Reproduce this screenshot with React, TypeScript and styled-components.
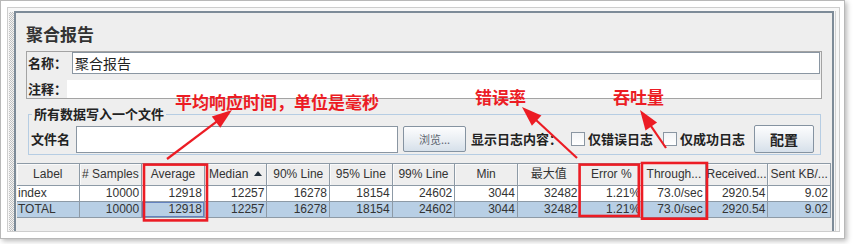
import React from "react";
import styled, { createGlobalStyle } from "styled-components";

const CJK = `"Noto Sans CJK SC", "Liberation Sans", sans-serif`;
const SANS = `"Liberation Sans", Arial, "Noto Sans CJK SC", sans-serif`;
const RED = "#ec1c24";
const EDGE = "#7d8b98";
const GRID = "#8d9aa6";

const Global = createGlobalStyle`
  html, body { margin: 0; padding: 0; background: #fff; }
  body { width: 853px; height: 244px; overflow: hidden; font-family: ${CJK}; }
  * { box-sizing: border-box; }
`;

const Stage = styled.div`
  position: relative;
  width: 853px;
  height: 244px;
`;

const Shot = styled.div`
  width: 845px;
  height: 239px;
  border: 1px solid #b8b8b8;
  background: #fff;
  box-shadow: 2px 2px 5px rgba(0, 0, 0, 0.28);
  padding: 6px 4px 6px 6px;
`;

const Frame = styled.div`
  height: 100%;
  border: 1px solid #cdcdcd;
  display: flex;
  padding-top: 3px;
  background: #f7f7f7;
`;

const Gutter = styled.div`
  width: 5px;
  margin-left: 1px;
  margin-top: 1px;
  background: repeating-conic-gradient(#c2c2c2 0 25%, #f4f4f4 0 50%) 0 0 / 2px 2px;
`;

const Rail = styled.div`
  width: 4px;
  margin-left: 1px;
  border-left: 1px solid #d2d2d2;
`;

const Panel = styled.div`
  width: 820px;
  background: #eeeeee;
  border-top: 2px solid ${EDGE};
  border-left: 2px solid ${EDGE};
  border-right: 2px solid ${EDGE};
  display: flex;
  flex-direction: column;
`;

const Title = styled.div`
  margin: 9px 0 5px 10px;
  height: 24px;
  font: 700 17px/24px ${CJK};
  color: #333;
`;

const NameBox = styled.div`
  margin: 0 10px;
  border: 1px solid #a3a3a3;
  display: flex;
  flex-direction: column;
`;

const FieldRow = styled.div<{ $gap?: number }>`
  display: flex;
  align-items: center;
  margin-top: ${(p) => p.$gap ?? 0}px;
`;

const Label = styled.span<{ $w: number; $pad?: number }>`
  flex: none;
  width: ${(p) => p.$w}px;
  padding-left: ${(p) => p.$pad ?? 1}px;
  font: 700 13px/16px ${CJK};
  color: #222;
  white-space: nowrap;
`;

const TextField = styled.div<{ $h: number; $plain?: boolean }>`
  flex: 1;
  height: ${(p) => p.$h}px;
  margin-right: ${(p) => (p.$plain ? 0 : 1)}px;
  background: #fff;
  border: ${(p) => (p.$plain ? "none" : "1px solid #8a96a2")};
  padding-left: 2px;
  font: 400 14px/20px ${CJK};
  color: #222;
`;

const FileSet = styled.fieldset`
  margin: 7px 11px 0 12px;
  padding: 3px 0 1px 0;
  border: 1px solid #b6cde3;
  min-width: 0;
`;

const Legend = styled.legend`
  margin-left: 3px;
  padding: 0 2px;
  font: 700 13px/16px ${CJK};
  color: #222;
`;

const FileRow = styled.div`
  display: flex;
  align-items: center;
  height: 28px;
`;

const FileInput = styled.div`
  flex: none;
  width: 322px;
  height: 27px;
  background: #fff;
  border: 1px solid #8a96a2;
`;

const Button = styled.button<{ $w: number; $h: number; $small?: boolean }>`
  flex: none;
  width: ${(p) => p.$w}px;
  height: ${(p) => p.$h}px;
  margin-left: ${(p) => (p.$small ? 5 : 0)}px;
  padding: 0;
  border: 1px solid #8593a1;
  border-radius: 2px;
  background: linear-gradient(#fdfdfe, #e9eef3 55%, #d6e0ea);
  font: ${(p) => (p.$small ? `400 11px/14px ${CJK}` : `700 14px/18px ${CJK}`)};
  color: ${(p) => (p.$small ? "#5c6570" : "#222")};
`;

const LogLabel = styled.span`
  flex: none;
  width: 100px;
  margin-left: 5px;
  font: 700 13px/16px ${CJK};
  color: #222;
  white-space: nowrap;
`;

const Check = styled.span`
  flex: none;
  width: 14px;
  height: 14px;
  border: 1px solid #8a96a2;
  background: linear-gradient(#f2f4f6, #ffffff);
`;

const CheckText = styled.span<{ $w: number }>`
  flex: none;
  width: ${(p) => p.$w}px;
  margin-left: 3px;
  font: 700 13px/16px ${CJK};
  color: #222;
  white-space: nowrap;
`;

const Grid = styled.table`
  margin: 8px 0 0 1px;
  width: 814px;
  table-layout: fixed;
  border-collapse: separate;
  border-spacing: 0;
  border-top: 1px solid ${GRID};
  font: 400 12px ${SANS};
  color: #333;
`;

const Th = styled.th`
  padding: 0;
  line-height: 21px;
  font-weight: 400;
  text-align: center;
  white-space: nowrap;
  overflow: hidden;
  background: #eeeeee;
  border-right: 1px solid ${GRID};
  border-bottom: 1px solid ${GRID};
  box-shadow: inset 1px 1px 0 #fafafa;
`;

const SortMark = styled.span`
  display: inline-block;
  margin-left: 6px;
  width: 0;
  height: 0;
  border-left: 4px solid transparent;
  border-right: 4px solid transparent;
  border-bottom: 5px solid #22303c;
  vertical-align: 2px;
`;

const Tr = styled.tr<{ $sel?: boolean }>`
  background: ${(p) => (p.$sel ? "#b8cfe5" : "#ffffff")};
`;

const Td = styled.td<{ $left?: boolean; $focus?: boolean }>`
  padding: 0 2px 0 1px;
  line-height: 15px;
  text-align: ${(p) => (p.$left ? "left" : "right")};
  white-space: nowrap;
  overflow: hidden;
  border-right: 1px solid ${GRID};
  border-bottom: 1px solid ${GRID};
  box-shadow: ${(p) => (p.$focus ? "inset 0 0 0 1px #6382bf" : "none")};
`;

const Note = styled.div<{ $x: number; $y: number }>`
  position: absolute;
  left: ${(p) => p.$x}px;
  top: ${(p) => p.$y}px;
  font: 700 17px/17px ${CJK};
  color: ${RED};
  white-space: nowrap;
`;

const Overlay = styled.svg`
  position: absolute;
  left: 0;
  top: 0;
  pointer-events: none;
`;

const headers = [
  "Label",
  "# Samples",
  "Average",
  "Median",
  "90% Line",
  "95% Line",
  "99% Line",
  "Min",
  "最大值",
  "Error %",
  "Through...",
  "Received...",
  "Sent KB/...",
];

const values = ["10000", "12918", "12257", "16278", "18154", "24602", "3044", "32482", "1.21%", "73.0/sec", "2920.54", "9.02"];

const rows = [
  { label: "index", sel: false },
  { label: "TOTAL", sel: true },
];

function Arrow({ x1, y1, x2, y2 }: { x1: number; y1: number; x2: number; y2: number }) {
  const dx = x2 - x1;
  const dy = y2 - y1;
  const len = Math.hypot(dx, dy);
  const ux = dx / len;
  const uy = dy / len;
  const L = 20;
  const W = 7;
  const bx = x2 - ux * L;
  const by = y2 - uy * L;
  const nx = -uy;
  const ny = ux;
  const pts = `${x2},${y2} ${bx + nx * W},${by + ny * W} ${bx - nx * W},${by - ny * W}`;
  return (
    <g>
      <line x1={x1} y1={y1} x2={bx + ux * 2} y2={by + uy * 2} stroke={RED} strokeWidth={2.2} />
      <polygon points={pts} fill={RED} />
    </g>
  );
}

export default function App() {
  return (
    <Stage>
      <Global />
      <Shot>
        <Frame>
          <Gutter />
          <Panel>
            <Title>聚合报告</Title>
            <NameBox>
              <FieldRow>
                <Label $w={45}>名称：</Label>
                <TextField $h={22}>聚合报告</TextField>
              </FieldRow>
              <FieldRow $gap={6}>
                <Label $w={40}>注释：</Label>
                <TextField $h={18} $plain />
              </FieldRow>
            </NameBox>
            <FileSet>
              <Legend>所有数据写入一个文件</Legend>
              <FileRow>
                <Label $w={47} $pad={2}>文件名</Label>
                <FileInput />
                <Button $w={63} $h={26} $small>浏览...</Button>
                <LogLabel>显示日志内容：</LogLabel>
                <Check />
                <CheckText $w={75}>仅错误日志</CheckText>
                <Check />
                <CheckText $w={74}>仅成功日志</CheckText>
                <Button $w={60} $h={28}>配置</Button>
              </FileRow>
            </FileSet>
            <Grid>
              <thead>
                <tr>
                  {headers.map((h) => (
                    <Th key={h}>
                      {h}
                      {h === "Median" && <SortMark />}
                    </Th>
                  ))}
                </tr>
              </thead>
              <tbody>
                {rows.map((r) => (
                  <Tr key={r.label} $sel={r.sel}>
                    <Td $left>{r.label}</Td>
                    {values.map((v, i) => (
                      <Td key={i} $focus={r.sel && i === 1}>
                        {v}
                      </Td>
                    ))}
                  </Tr>
                ))}
              </tbody>
            </Grid>
          </Panel>
          <Rail />
        </Frame>
      </Shot>

      <Note $x={175} $y={93}>平均响应时间，单位是毫秒</Note>
      <Note $x={475} $y={88}>错误率</Note>
      <Note $x={613} $y={88}>吞吐量</Note>

      <Overlay width={853} height={244} viewBox="0 0 853 244">
        <rect x={144} y={164.6} width={63} height={55.8} fill="none" stroke={RED} strokeWidth={2.6} />
        <rect x={579.6} y={164.6} width={59.2} height={51.4} fill="none" stroke={RED} strokeWidth={2.6} />
        <rect x={642} y={163} width={65} height={55.7} fill="none" stroke={RED} strokeWidth={2.6} />
        <Arrow x1={167} y1={159} x2={232} y2={110} />
        <Arrow x1={577} y1={158} x2={522} y2={107} />
        <Arrow x1={666} y1={148} x2={640} y2={110} />
      </Overlay>
    </Stage>
  );
}
